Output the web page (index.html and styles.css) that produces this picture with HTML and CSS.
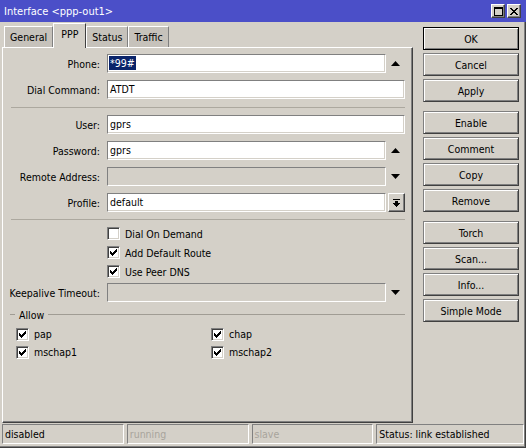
FILE: index.html
```html
<!DOCTYPE html>
<html>
<head>
<meta charset="utf-8">
<title>Interface &lt;ppp-out1&gt;</title>
<link rel="stylesheet" href="styles.css">
</head>
<body>
<div class="window">
  <div class="titlebar">
    <span class="title">Interface &lt;ppp-out1&gt;</span>
    <div class="tb-buttons">
      <span class="tb-btn"><svg width="9" height="9" viewBox="0 0 9 9" shape-rendering="crispEdges"><rect x="0.5" y="0.5" width="8" height="8" fill="none" stroke="#000"/><rect x="0" y="0" width="9" height="2" fill="#000"/></svg></span>
      <span class="tb-btn"><svg width="8" height="7" viewBox="0 0 8 7" shape-rendering="crispEdges"><path d="M0 0h2v1h1v1h2v-1h1v-1h2v1h-1v1h-1v1h-1v1h1v1h1v1h1v1h-2v-1h-1v-1h-2v1h-1v1h-2v-1h1v-1h1v-1h1v-1h-1v-1h-1v-1h-1z" fill="#000"/></svg></span>
    </div>
  </div>
  <div class="content">
    <div class="content-inner">
      <div class="main">
        <div class="left">
          <div class="tabs">
            <div class="tab">General</div>
            <div class="tab active">PPP</div>
            <div class="tab">Status</div>
            <div class="tab">Traffic</div>
          </div>
          <div class="panel">
            <div class="form">
              <div class="row">
                <span class="lbl">Phone:</span>
                <div class="field"><span class="sel">*99#</span></div>
                <div class="slot"><svg width="9" height="5" viewBox="0 0 9 5"><polygon points="0,5 9,5 4.5,0" fill="#000"/></svg></div>
              </div>
              <div class="row">
                <span class="lbl">Dial Command:</span>
                <div class="field">ATDT</div>
              </div>
              <div class="sep"></div>
              <div class="row">
                <span class="lbl">User:</span>
                <div class="field">gprs</div>
              </div>
              <div class="row">
                <span class="lbl">Password:</span>
                <div class="field">gprs</div>
                <div class="slot"><svg width="9" height="5" viewBox="0 0 9 5"><polygon points="0,5 9,5 4.5,0" fill="#000"/></svg></div>
              </div>
              <div class="row">
                <span class="lbl">Remote Address:</span>
                <div class="field disabled"></div>
                <div class="slot"><svg width="9" height="5" viewBox="0 0 9 5"><polygon points="0,0 9,0 4.5,5" fill="#000"/></svg></div>
              </div>
              <div class="row">
                <span class="lbl">Profile:</span>
                <div class="field">default</div>
                <div class="slot"><span class="dd-btn"><svg width="7" height="8" viewBox="0 0 7 8" shape-rendering="crispEdges"><rect x="0" y="0" width="7" height="1" fill="#000"/><rect x="2" y="2" width="3" height="2" fill="#000"/><path d="M0 4h7v1h-1v1h-1v1h-1v1h-1v-1h-1v-1h-1v-1h-1z" fill="#000"/></svg></span></div>
              </div>
              <div class="sep sep2"></div>
              <div class="cb-row"><span class="cb"></span><span>Dial On Demand</span></div>
              <div class="cb-row"><span class="cb"><svg width="7" height="7" viewBox="0 0 7 7" shape-rendering="crispEdges"><path d="M6 0h1v3h-1v1h-1v1h-1v1h-1v1h-1v-1h-1v-1h-1v-3h1v1h1v1h1v-1h1v-1h1z" fill="#000"/></svg></span><span>Add Default Route</span></div>
              <div class="cb-row"><span class="cb"><svg width="7" height="7" viewBox="0 0 7 7" shape-rendering="crispEdges"><path d="M6 0h1v3h-1v1h-1v1h-1v1h-1v1h-1v-1h-1v-1h-1v-3h1v1h1v1h1v-1h1v-1h1z" fill="#000"/></svg></span><span>Use Peer DNS</span></div>
              <div class="row keepalive">
                <span class="lbl">Keepalive Timeout:</span>
                <div class="field disabled"></div>
                <div class="slot"><svg width="9" height="5" viewBox="0 0 9 5"><polygon points="0,0 9,0 4.5,5" fill="#000"/></svg></div>
              </div>
              <div class="group-head"><span class="dash"></span><span class="group-title">Allow</span><span class="gline"></span></div>
              <div class="allow">
                <div class="cb-item"><span class="cb"><svg width="7" height="7" viewBox="0 0 7 7" shape-rendering="crispEdges"><path d="M6 0h1v3h-1v1h-1v1h-1v1h-1v1h-1v-1h-1v-1h-1v-3h1v1h1v1h1v-1h1v-1h1z" fill="#000"/></svg></span><span>pap</span></div>
                <div class="cb-item"><span class="cb"><svg width="7" height="7" viewBox="0 0 7 7" shape-rendering="crispEdges"><path d="M6 0h1v3h-1v1h-1v1h-1v1h-1v1h-1v-1h-1v-1h-1v-3h1v1h1v1h1v-1h1v-1h1z" fill="#000"/></svg></span><span>chap</span></div>
                <div class="cb-item"><span class="cb"><svg width="7" height="7" viewBox="0 0 7 7" shape-rendering="crispEdges"><path d="M6 0h1v3h-1v1h-1v1h-1v1h-1v1h-1v-1h-1v-1h-1v-3h1v1h1v1h1v-1h1v-1h1z" fill="#000"/></svg></span><span>mschap1</span></div>
                <div class="cb-item"><span class="cb"><svg width="7" height="7" viewBox="0 0 7 7" shape-rendering="crispEdges"><path d="M6 0h1v3h-1v1h-1v1h-1v1h-1v1h-1v-1h-1v-1h-1v-3h1v1h1v1h1v-1h1v-1h1z" fill="#000"/></svg></span><span>mschap2</span></div>
              </div>
            </div>
          </div>
        </div>
        <div class="buttons">
          <div class="btn default">OK</div>
          <div class="btn">Cancel</div>
          <div class="btn">Apply</div>
          <div class="btn group">Enable</div>
          <div class="btn">Comment</div>
          <div class="btn">Copy</div>
          <div class="btn">Remove</div>
          <div class="btn group">Torch</div>
          <div class="btn">Scan...</div>
          <div class="btn">Info...</div>
          <div class="btn">Simple Mode</div>
        </div>
      </div>
      <div class="statusbar">
        <div class="sb-cell">disabled</div>
        <div class="sb-cell dim">running</div>
        <div class="sb-cell dim">slave</div>
        <div class="sb-cell wide">Status: link established</div>
      </div>
    </div>
  </div>
</div>
</body>
</html>
```
FILE: styles.css
```css
* { box-sizing: border-box; }
html, body { margin: 0; padding: 0; }
body {
  background: #d4d0c8;
  font-family: "DejaVu Sans Condensed", "DejaVu Sans", "Liberation Sans", sans-serif;
  font-stretch: condensed;
  font-size: 10.5px;
  color: #000;
}
.window {
  width: 526px;
  height: 448px;
  display: flex;
  flex-direction: column;
  overflow: hidden;
}
.titlebar {
  height: 22px;
  flex: none;
  background: #4b4fc8;
  color: #fff;
  display: flex;
  align-items: center;
  padding-left: 4px;
  padding-right: 5px;
}
.title { font-size: 11px; }
.tb-buttons { margin-left: auto; display: flex; gap: 2px; }
.tb-btn {
  width: 14px;
  height: 14px;
  background: #d4d0c8;
  border: 1px solid;
  border-color: #fff #404040 #404040 #fff;
  box-shadow: inset -1px -1px 0 #808080;
  display: flex;
  align-items: center;
  justify-content: center;
}
.content {
  flex: 1;
  border-right: 1px solid #404040;
  border-bottom: 1px solid #404040;
}
.content-inner {
  height: 100%;
  border-right: 1px solid #808080;
  border-bottom: 1px solid #808080;
  display: flex;
  flex-direction: column;
}
.main {
  height: 402px;
  display: flex;
}
.left {
  margin-left: 2px;
  width: 411px;
  display: flex;
  flex-direction: column;
}
.tabs {
  margin-top: 1px;
  height: 24px;
  display: flex;
  align-items: flex-end;
  padding-left: 2px;
}
.tab {
  height: 21px;
  padding: 0 5px;
  line-height: 20px;
  background: #c6c2bb;
  border-top: 1px solid #fff;
  border-left: 1px solid #fff;
  border-right: 1px solid #808080;
}
.tab.active {
  height: 25px;
  padding: 0 7px;
  line-height: 21px;
  background: #d4d0c8;
  margin-bottom: -1px;
  position: relative;
  z-index: 1;
  border-right-color: #404040;
}
.panel {
  height: 376px;
  border-top: 1px solid #fff;
  border-left: 1px solid #fff;
  border-right: 1px solid #404040;
  border-bottom: 1px solid #404040;
  box-shadow: inset -1px -1px 0 #808080;
}
.form {
  display: flex;
  flex-direction: column;
  padding: 6px 7px 0 0;
}
.row {
  display: flex;
  align-items: center;
  height: 19px;
  margin-bottom: 7px;
}
.row:nth-child(2) { margin-bottom: 0; }
.lbl {
  width: 97px;
  text-align: right;
  margin-right: 7px;
  white-space: nowrap;
  flex: none;
}
.field {
  flex: 1;
  height: 19px;
  background: #fff;
  border: 1px solid;
  border-color: #808080 #fff #fff #808080;
  box-shadow: inset -1px -1px 0 #d4d0c8;
  padding-left: 2px;
  line-height: 17px;
  white-space: nowrap;
}
.field.disabled { background: #d4d0c8; }
.sel {
  background: #0a246a;
  color: #fff;
  padding: 1px 1px;
  margin-left: -1px;
}
.slot {
  width: 19px;
  flex: none;
  display: flex;
  align-items: center;
  justify-content: center;
}
.slot svg { display: block; }
.dd-btn {
  width: 17px;
  height: 19px;
  margin-left: 2px;
  border: 1px solid;
  border-color: #fff #404040 #404040 #fff;
  box-shadow: inset -1px -1px 0 #808080;
  display: flex;
  align-items: center;
  justify-content: center;
}
.sep {
  height: 1px;
  background: #aca89f;
  margin: 8px 0 7px 8px;
}
.sep2 { margin: 7px 0 4px 8px; }
.row:nth-child(7) { margin-bottom: 0; }
.cb-row {
  height: 19px;
  display: flex;
  align-items: center;
  padding-left: 104px;
}
.cb {
  width: 13px;
  height: 13px;
  flex: none;
  background: #fff;
  border: 1px solid;
  border-color: #808080 #fff #fff #808080;
  box-shadow: inset 1px 1px 0 #404040, inset -1px -1px 0 #d4d0c8;
  display: flex;
  align-items: center;
  justify-content: center;
  margin-right: 5px;
}
.cb svg { display: block; }
.keepalive { margin-top: 2px; margin-bottom: 0; }
.group-head {
  margin-top: 6px;
  height: 13px;
  display: flex;
  align-items: center;
  padding-left: 7px;
}
.dash { width: 5px; height: 1px; background: #a09c94; }
.group-title { margin: 0 4px; }
.gline { flex: 1; height: 1px; background: #a09c94; }
.allow {
  margin-top: 4px;
  padding-left: 13px;
  display: grid;
  grid-template-columns: 195px 1fr;
  grid-auto-rows: 18px;
}
.cb-item { display: flex; align-items: center; }
.buttons {
  margin-left: 10px;
  padding-top: 5px;
  width: 96px;
  display: flex;
  flex-direction: column;
  gap: 3px;
}
.btn {
  height: 23px;
  border: 1px solid;
  border-color: #808080 #404040 #404040 #808080;
  box-shadow: inset 1px 1px 0 #fff, inset -1px -1px 0 #808080;
  display: flex;
  align-items: center;
  justify-content: center;
}
.btn.default { border-color: #000; }
.btn.group { margin-top: 6px; }
.statusbar {
  height: 20px;
  display: flex;
  gap: 3px;
  padding-left: 2px;
}
.sb-cell {
  width: 122px;
  height: 20px;
  border: 1px solid;
  border-color: #808080 #fff #fff #808080;
  padding-left: 2px;
  line-height: 18px;
  white-space: nowrap;
  overflow: hidden;
}
.sb-cell.dim { color: #a8a49c; }
.sb-cell.wide { width: 148px; }
```
